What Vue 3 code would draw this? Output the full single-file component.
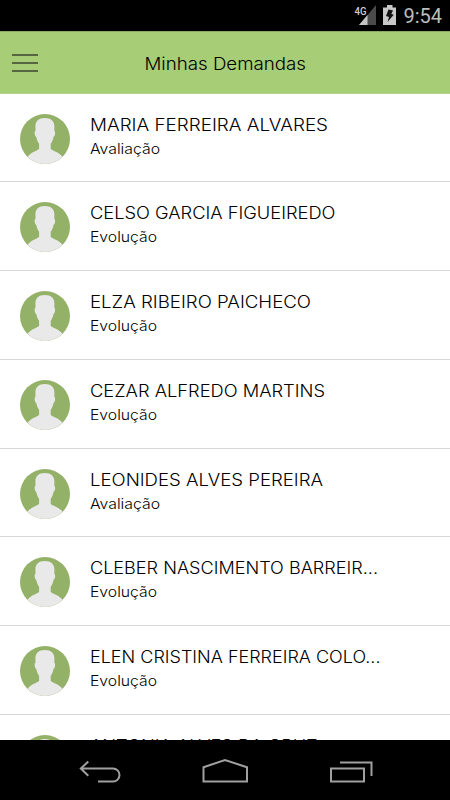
<script setup>
// largura = largura do nome já renderizado, em px
const demandas = [
  { id: 1, nome: 'MARIA FERREIRA ALVARES', tipo: 'Avaliação', largura: 238 },
  { id: 2, nome: 'CELSO GARCIA FIGUEIREDO', tipo: 'Evolução', largura: 245.5 },
  { id: 3, nome: 'ELZA RIBEIRO PAICHECO', tipo: 'Evolução', largura: 221 },
  { id: 4, nome: 'CEZAR ALFREDO MARTINS', tipo: 'Evolução', largura: 235 },
  { id: 5, nome: 'LEONIDES ALVES PEREIRA', tipo: 'Avaliação', largura: 233 },
  { id: 6, nome: 'CLEBER NASCIMENTO BARREIR...', tipo: 'Evolução', largura: 288 },
  { id: 7, nome: 'ELEN CRISTINA FERREIRA COLO...', tipo: 'Evolução', largura: 290.5 },
  { id: 8, nome: 'ANTONIA ALVES DA CRUZ', tipo: 'Evolução', largura: 227.5 }
]

const largurasTipo = { 'Avaliação': 70, 'Evolução': 67 }
</script>

<template>
  <div class="tela">
    <div class="status">
      <svg class="status-icones" width="46" height="31" viewBox="0 0 46 31">
        <path d="M5 25 L22 5 V25 Z" fill="#4a4a4a" />
        <path d="M5 25 L13.5 15 V25 Z" fill="#c4c4c4" />
        <text class="rede" x="0.5" y="14.5" textLength="12" lengthAdjust="spacingAndGlyphs">4G</text>
        <path d="M29 7.5 H33 V5 H38.5 V7.5 H42 V25 H29 Z" fill="#c8c8c8" />
        <path d="M34.5 9.5 L39 10.5 L37.3 14 L39.8 14.8 L33.5 22 L35 17 L32 16 Z" fill="#111" />
      </svg>
      <span class="hora">9:54</span>
    </div>

    <header class="cabecalho">
      <button class="menu" aria-label="Menu">
        <span></span>
        <span></span>
        <span></span>
      </button>
      <h1>
        <svg width="162" height="26">
          <text x="0.5" y="21" textLength="161.5" lengthAdjust="spacingAndGlyphs">Minhas Demandas</text>
        </svg>
      </h1>
    </header>

    <ul class="lista">
      <li v-for="demanda in demandas" :key="demanda.id" class="item">
        <svg class="avatar" viewBox="0 0 50 50">
          <circle cx="25" cy="25" r="25" fill="#94b168" />
          <path
            d="M24.8 4 C18.5 4 15.3 7.5 15.4 12.5 L15.5 16.8 C14 17.5 14.6 22.3 16.3 23 C16.8 26 17.8 28 19.1 29.8 V35 C16.3 37.3 11 38 7.5 42.8 A25 25 0 0 0 42.5 42.8 C39 38 33.4 37.3 30.7 35 V29.8 C32 28 33 26 33.5 23 C35.2 22.3 35.7 17.5 34.3 16.8 L34.4 12.5 C34.5 7.5 31.2 4 24.8 4 Z"
            fill="#e9e9e9" />
        </svg>
        <div class="textos">
          <svg class="nome" width="300" height="24">
            <text x="0" y="16.5" :textLength="demanda.largura" lengthAdjust="spacingAndGlyphs">{{ demanda.nome }}</text>
          </svg>
          <svg class="tipo" width="300" height="24">
            <text x="0" y="16.4" :textLength="largurasTipo[demanda.tipo]" lengthAdjust="spacingAndGlyphs">{{ demanda.tipo }}</text>
          </svg>
        </div>
      </li>
    </ul>

    <nav class="navegacao">
      <svg viewBox="0 0 450 60" width="450" height="60">
        <path d="M88.3 21.5 L80.8 28.5 L88.3 35.7 M81 28.5 H113 A6.5 6.5 0 0 1 113 41.5 H98" />
        <path d="M203.5 27.2 L225 20 L247 27.2 V41.5 H203.5 Z" />
        <path d="M331 28.5 H364 V41.5 H331 Z M340 22.5 H371.5 V36" />
      </svg>
    </nav>
  </div>
</template>

<style>
body {
  margin: 0;
  overflow: hidden;
}
</style>

<style scoped>
.tela {
  display: flex;
  flex-direction: column;
  width: 450px;
  height: 800px;
  overflow: hidden;
  background: #fff;
  font-family: "Inter", sans-serif;
  color: #000;
}

.status {
  display: flex;
  flex: none;
  justify-content: flex-end;
  align-items: center;
  gap: 3px;
  height: 31px;
  padding-right: 8px;
  background: #000;
}

.rede {
  font: 500 11px "Roboto", sans-serif;
  fill: #d0d0d0;
  stroke: #000;
  stroke-width: 2px;
  paint-order: stroke;
}

.hora {
  font: 400 20px/32px "Roboto", sans-serif;
  color: #bdbdbd;
}

.cabecalho {
  display: grid;
  grid-template-columns: 50px 1fr 50px;
  flex: none;
  align-items: center;
  box-sizing: border-box;
  height: 62.5px;
  background: #a8cd77;
  border-top: 1px solid #8aaa61;
  border-bottom: 1px solid #b5d38c;
}

.menu {
  display: flex;
  flex-direction: column;
  gap: 6px;
  width: 26px;
  margin-left: 12px;
  padding: 1px 0 0;
  border: 0;
  background: none;
}

.menu span {
  width: 26px;
  height: 2px;
  background: #566640;
}

h1 {
  display: flex;
  justify-content: center;
  margin: 0;
  font-size: 17px;
  font-weight: 300;
}

.lista {
  flex: 1;
  min-height: 0;
  margin: 0;
  padding: 0;
  overflow: hidden;
  list-style: none;
}

.item {
  display: flex;
  gap: 20px;
  box-sizing: border-box;
  height: 88.75px;
  padding: 20px 20px 0;
  border-bottom: 1px solid #d8d8d8;
}

.avatar {
  flex: none;
  width: 50px;
  height: 50px;
}

.textos {
  display: flex;
  flex-direction: column;
  font-weight: 350;
}

.nome {
  font-size: 16.7px;
}

.tipo {
  font-size: 14.2px;
}

.navegacao {
  flex: none;
  height: 60px;
  background: #000;
}

.navegacao path {
  fill: none;
  stroke: #a0a0a0;
  stroke-width: 2;
}
</style>
